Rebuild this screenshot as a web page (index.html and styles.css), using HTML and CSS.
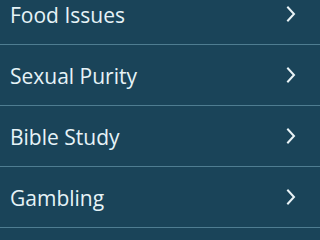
FILE: index.html
```html
<!DOCTYPE html>
<html>
<head>
<meta charset="utf-8">
<link rel="stylesheet" href="styles.css">
</head>
<body>
<ul class="list">
  <li class="row"><span class="label">Food Issues</span><svg class="chev" width="10" height="16" viewBox="0 0 10 16"><path d="M2 1.5 L8 8 L2 14.5" fill="none" stroke="#e9f3f6" stroke-width="2" stroke-linecap="square"/></svg></li>
  <li class="row"><span class="label">Sexual Purity</span><svg class="chev" width="10" height="16" viewBox="0 0 10 16"><path d="M2 1.5 L8 8 L2 14.5" fill="none" stroke="#e9f3f6" stroke-width="2" stroke-linecap="square"/></svg></li>
  <li class="row"><span class="label">Bible Study</span><svg class="chev" width="10" height="16" viewBox="0 0 10 16"><path d="M2 1.5 L8 8 L2 14.5" fill="none" stroke="#e9f3f6" stroke-width="2" stroke-linecap="square"/></svg></li>
  <li class="row"><span class="label">Gambling</span><svg class="chev" width="10" height="16" viewBox="0 0 10 16"><path d="M2 1.5 L8 8 L2 14.5" fill="none" stroke="#e9f3f6" stroke-width="2" stroke-linecap="square"/></svg></li>
</ul>
</body>
</html>
```
FILE: styles.css
```css
html, body {
  margin: 0;
  padding: 0;
  background: #1a4459;
  overflow: hidden;
}
.list {
  list-style: none;
  margin: -16px 0 0 0;
  padding: 0;
}
.row {
  height: 60px;
  border-bottom: 1px solid #4f7d91;
  display: flex;
  align-items: center;
  justify-content: space-between;
  padding: 0 24px 0 10px;
  font-family: "Open Sans", sans-serif;
  font-size: 21px;
  color: #e6f3f7;
}
.label {
  padding-top: 2px;
}
.chev {
  display: block;
}
```
